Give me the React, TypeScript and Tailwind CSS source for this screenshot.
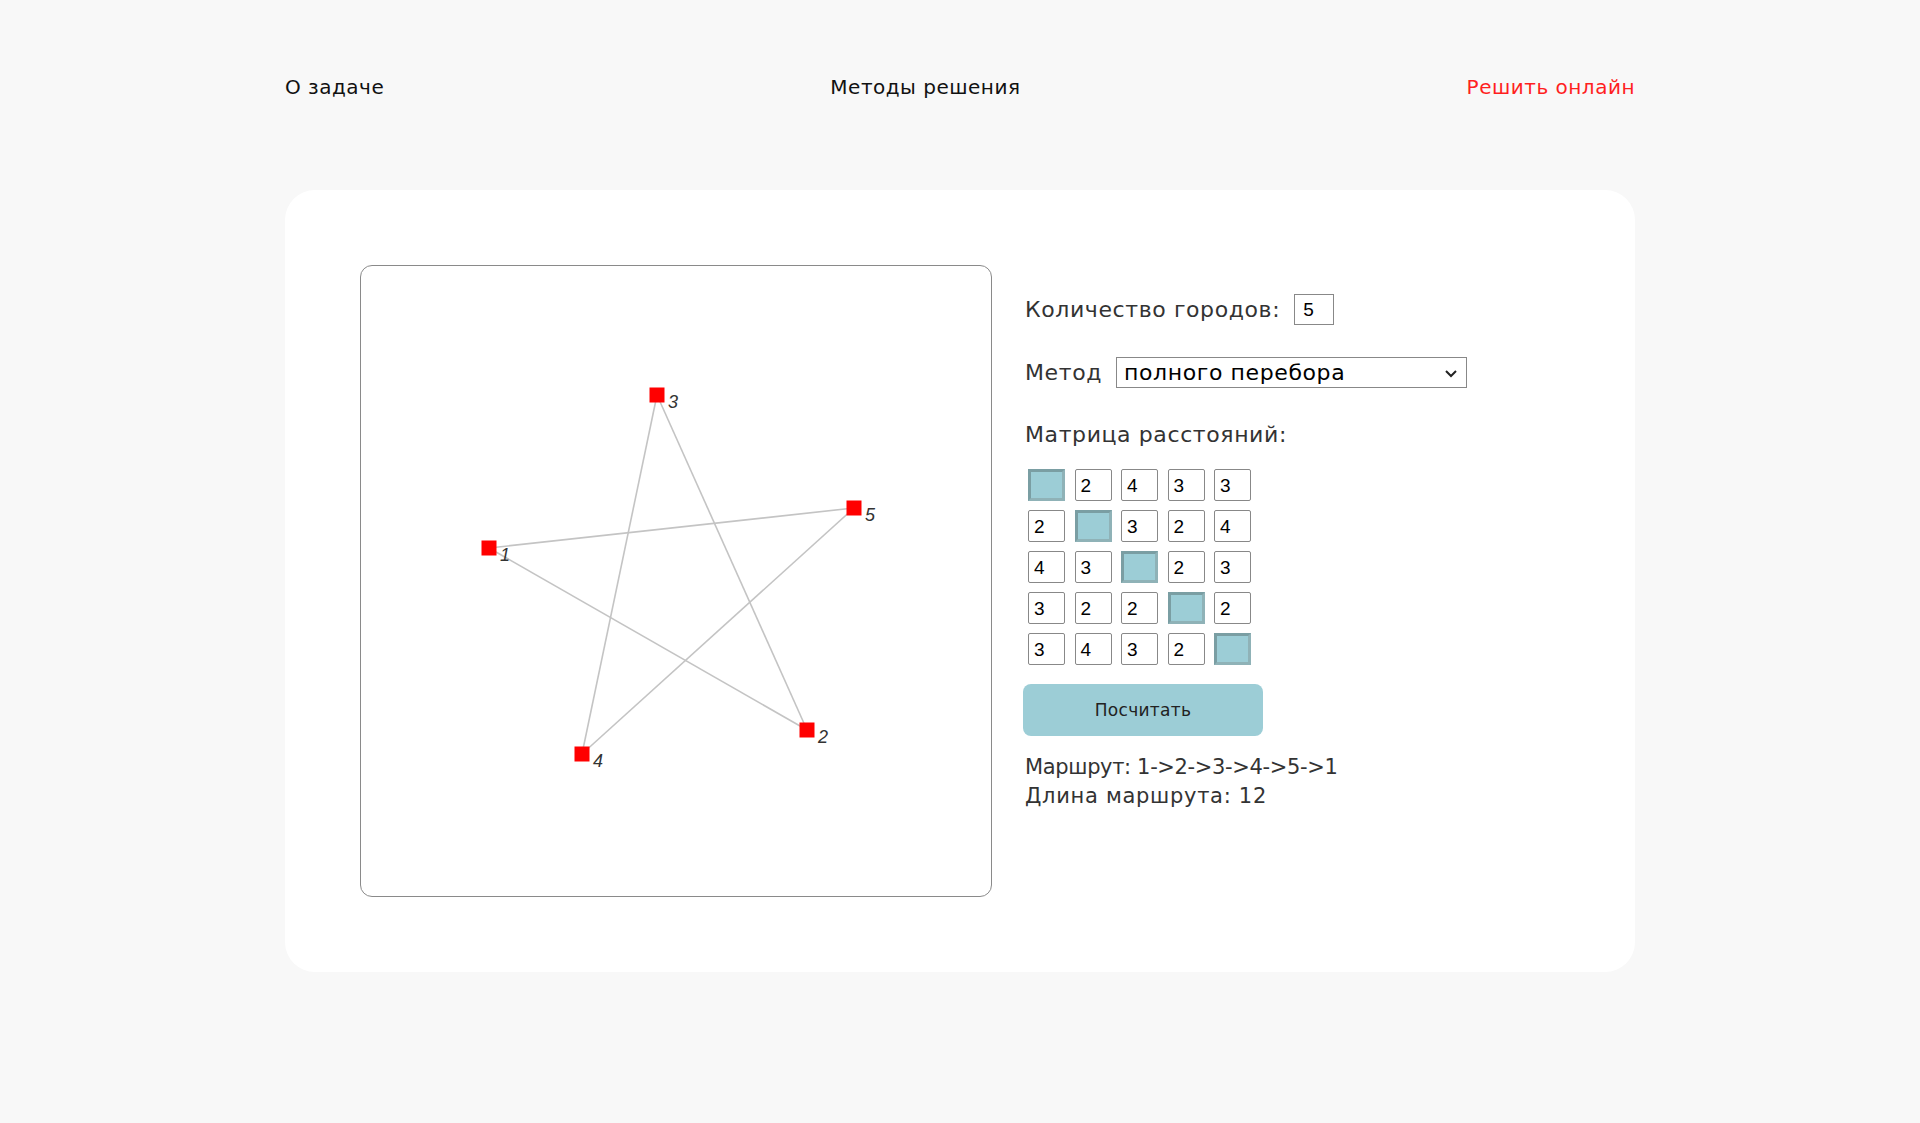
import React from "react";

const nodes = [
  { id: 1, x: 128, y: 282 },
  { id: 2, x: 446, y: 464 },
  { id: 3, x: 296, y: 129 },
  { id: 4, x: 221, y: 488 },
  { id: 5, x: 493, y: 242 },
];
const edges: [number, number][] = [
  [1, 2],
  [2, 3],
  [3, 4],
  [4, 5],
  [5, 1],
];
const matrix = [
  [null, 2, 4, 3, 3],
  [2, null, 3, 2, 4],
  [4, 3, null, 2, 3],
  [3, 2, 2, null, 2],
  [3, 4, 3, 2, null],
];

const font = { fontFamily: '"DejaVu Sans", sans-serif' };
const arial = { fontFamily: '"Liberation Sans", Arial, sans-serif' };

export default function App() {
  const get = (id: number) => nodes.find((n) => n.id === id)!;
  return (
    <div className="min-h-[1123px] bg-[#f8f8f8] text-[#222]" style={font}>
      <div className="mx-auto w-[1350px]">
        <nav className="flex justify-between pt-[75px] text-[20px] leading-[24px] tracking-[0.5px] font-normal">
          <a className="text-[#111]">О задаче</a>
          <a className="text-[#111]">Методы решения</a>
          <a className="text-[#ff1f1f]">Решить онлайн</a>
        </nav>
        <div className="mt-[91px] flex rounded-[30px] bg-white p-[75px] pr-0">
          <div className="h-[632px] w-[632px] shrink-0 rounded-[12px] border border-[#8a8a8a] bg-white">
            <svg width="630" height="630" viewBox="0 0 630 630">
              {edges.map(([a, b]) => {
                const A = get(a);
                const B = get(b);
                return (
                  <line
                    key={`${a}-${b}`}
                    x1={A.x}
                    y1={A.y}
                    x2={B.x}
                    y2={B.y}
                    stroke="#c4c4c4"
                    strokeWidth="1.6"
                  />
                );
              })}
              {nodes.map((n) => (
                <g key={n.id}>
                  <rect x={n.x - 7.5} y={n.y - 7.5} width="15" height="15" fill="#ff0000" />
                  <text
                    x={n.x + 11}
                    y={n.y + 13}
                    fontFamily='"Liberation Sans", Arial, sans-serif'
                    fontStyle="italic"
                    fontSize="18"
                    fill="#333"
                  >
                    {n.id}
                  </text>
                </g>
              ))}
            </svg>
          </div>
          <div className="ml-[33px] flex flex-col pt-[29px] text-[22px] leading-[27px] tracking-[0.6px] font-normal text-[#333]">
            <div className="flex items-center">
              <span>Количество городов:</span>
              <div
                className="ml-[14px] flex h-[31px] w-[40px] items-center border border-[#888] px-[8px] text-[19px] tracking-normal text-black"
                style={arial}
              >
                5
              </div>
            </div>
            <div className="mt-[32px] flex items-center">
              <span>Метод</span>
              <div className="ml-[14px] flex h-[31px] w-[351px] items-center justify-between border border-[#888] pl-[7px] pr-[8px] text-[22px] text-black">
                <span>полного перебора</span>
                <svg width="14" height="10" viewBox="0 0 14 10">
                  <path d="M2 3 L7 8 L12 3" fill="none" stroke="#222" strokeWidth="2" />
                </svg>
              </div>
            </div>
            <div className="mt-[33px]">Матрица расстояний:</div>
            <div className="ml-[3px] mt-[21px] grid grid-cols-[repeat(5,37px)] gap-x-[9.5px] gap-y-[9px] tracking-normal">
              {matrix.flatMap((row, i) =>
                row.map((v, j) =>
                  v === null ? (
                    <div
                      key={`${i}-${j}`}
                      className="h-[32px] w-[37px] border-[3px] border-t-[#7a9ea3] border-l-[#7a9ea3] border-b-[#8fb2b7] border-r-[#8fb2b7] bg-[#9ccdd6]"
                    />
                  ) : (
                    <div
                      key={`${i}-${j}`}
                      className="flex h-[32px] w-[37px] items-center rounded-[2px] border border-[#888] bg-white pl-[5px] text-[19px] text-black"
                      style={arial}
                    >
                      {v}
                    </div>
                  )
                )
              )}
            </div>
            <button className="-ml-[2px] mt-[19px] h-[52px] w-[240px] rounded-[8px] bg-[#9ccdd6] text-[17px] tracking-[0.3px] font-normal text-[#222]">
              Посчитать
            </button>
            <div className="mt-[17px] text-[21px] leading-[29px] tracking-normal">
              <div className="tracking-[-0.35px]">Маршрут: 1-&gt;2-&gt;3-&gt;4-&gt;5-&gt;1</div>
              <div className="tracking-[0.7px]">Длина маршрута: 12</div>
            </div>
          </div>
        </div>
      </div>
    </div>
  );
}
